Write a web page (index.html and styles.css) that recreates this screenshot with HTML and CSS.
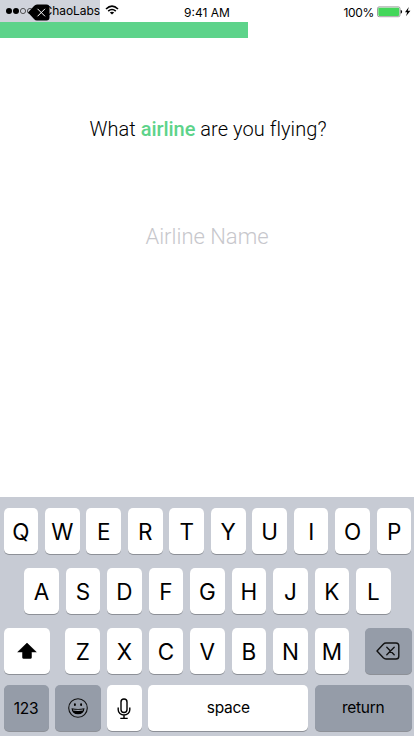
FILE: index.html
```html
<!DOCTYPE html>
<html lang="en">
<head>
<meta charset="utf-8">
<title>Airline</title>
<link rel="stylesheet" href="styles.css">
</head>
<body>
<div class="screen">
  <header class="status">
    <div class="carrier">
      <svg class="signal" width="36" height="22" viewBox="0 0 36 22"><circle cx="9" cy="11" r="3"/><circle cx="16" cy="11" r="3"/><g fill="none" stroke="#333" stroke-width=".8"><circle cx="23" cy="11" r="2.6"/><circle cx="30" cy="11" r="2.6"/></g></svg>
      <span class="carrier-name">ChaoLabs</span>
      <svg class="clear" width="23" height="18" viewBox="0 0 23 18"><path d="M1 8.6 7 2Q8.2.5 10 .5h9.500q3 0 3 3v10q0 3-3 3H10q-1.800 0-3-1.500z"/><path d="m10.500 4.800 7.500 7.500m0-7.500L10.500 12.300" stroke="#fff" stroke-width="1"/></svg>
    </div>
    <svg class="wifi" width="14" height="10" viewBox="0 0 14 10" fill="none" stroke="#000" stroke-width="1.600"><path d="M1 4Q7-1.700 13 4M3.200 6.200Q7 2.800 10.800 6.200"/><path d="M4.800 7.600Q7 5.900 9.200 7.600L7 9.600z" fill="#000" stroke="none"/></svg>
    <time class="clock">9:41 AM</time>
    <div class="power">
      <span>100%</span>
      <svg width="36" height="12" viewBox="0 0 36 12"><rect x=".5" y=".9" width="22.500" height="9.800" rx="1.600" fill="#fff" stroke="#777" stroke-width=".7"/><rect x="1.300" y="1.700" width="20.900" height="8.200" rx=".8" fill="#43d75a"/><path d="M23.700 3.800q1.400.4 1.400 2t-1.400 2z"/><path d="M31.800 1 28 6.300h2.200L29 10.300 33.400 4.700h-2.600z"/></svg>
    </div>
  </header>
  <div class="progress"><div class="progress-fill"></div></div>
  <main>
    <h1>What <strong>airline</strong> are you flying?</h1>
    <div class="field">Airline Name</div>
  </main>
  <section class="keyboard">
    <div class="row row-top"><b>Q</b><b>W</b><b>E</b><b>R</b><b>T</b><b>Y</b><b>U</b><b>I</b><b>O</b><b>P</b></div>
    <div class="row row-home"><b>A</b><b>S</b><b>D</b><b>F</b><b>G</b><b>H</b><b>J</b><b>K</b><b>L</b></div>
    <div class="row row-bottom">
      <b><svg width="20" height="18" viewBox="0 0 20 18"><path d="M10 1 19.300 10H14.500v5.500q0 1-1 1h-7q-1 0-1-1V10H.7z" stroke="#000" stroke-width=".5" stroke-linejoin="round"/></svg></b>
      <div class="letters"><b>Z</b><b>X</b><b>C</b><b>V</b><b>B</b><b>N</b><b>M</b></div>
      <b class="dark"><svg width="24" height="18" viewBox="0 0 24 18" fill="none" stroke="#111" stroke-width="1.400" stroke-linejoin="round" stroke-linecap="round"><path d="M1 9 7.300 2.200Q8.500 1 10 1h10q2.800 0 2.800 2.800v10.400q0 2.800-2.800 2.800H10q-1.500 0-2.700-1.200z"/><path d="m10.800 5.300 7.400 7.400m0-7.400-7.400 7.400"/></svg></b>
    </div>
    <div class="row row-actions">
      <b class="dark small digits">123</b>
      <b class="dark"><svg width="20" height="20" viewBox="0 0 20 20"><circle cx="10" cy="10" r="9.300" fill="none" stroke="#111" stroke-width="1.100"/><ellipse cx="6.900" cy="6.700" rx="1" ry="1.400"/><ellipse cx="13.100" cy="6.700" rx="1" ry="1.400"/><path d="M3.500 10.300q6.500 1.300 13 0Q16 16.300 10 16.300T3.500 10.300z"/><path d="M4.800 11.400q5.200.9 10.400 0l-.4 1.100q-4.800.8-9.600 0z" fill="#a9afb9"/></svg></b>
      <b><svg class="mic" width="14" height="22" viewBox="0 0 14 22" fill="none" stroke="#000" stroke-width="1.400"><rect x="4" y="1" width="6" height="13.500" rx="3"/><path d="M1.200 9.500v2.300a5.800 5.200 0 0 0 11.600 0V9.500M7 17v3.400M3.300 20.400h7.400"/></svg></b>
      <b class="small">space</b>
      <b class="dark small">return</b>
    </div>
  </section>
</div>
</body>
</html>
```
FILE: styles.css
```css
* { box-sizing: border-box; }
body { margin: 0; background: #fff; color: #000; font-family: Inter, "Liberation Sans", sans-serif; }
svg { display: block; flex: none; }
.screen { width: 414px; height: 736px; display: flex; flex-direction: column; overflow: hidden; }
.status { height: 22px; display: grid; grid-template-columns: 105px 66px 72px 1fr; font-size: 12px; line-height: 22px; flex: none; }
.carrier { position: relative; width: 100px; height: 22px; background: #d0d3db; display: flex; }
.carrier-name { margin-left: 7.500px; font-size: 12px; letter-spacing: -.05px; white-space: nowrap; }
.clear { position: absolute; left: 27px; top: 4px; }
.wifi { margin-top: 5px; }
.clock { margin-left: 13px; padding-top: 2px; white-space: nowrap; font-size: 12px; }
.power { display: flex; justify-content: flex-end; gap: 3px; padding: 2px 1px 0 0; }
.power span { letter-spacing: -.3px; }
.power svg { margin-top: 4px; }
.progress { height: 16px; flex: none; }
.progress-fill { width: 248.400px; height: 16px; background: #5dd38a; }
main { flex: 1; text-align: center; font-family: Roboto, sans-serif; }
h1 { margin: 78px 0 0; padding-left: 2px; font-size: 20px; line-height: 26px; font-weight: 300; letter-spacing: .07px; }
h1 strong { color: #5dd38a; font-weight: 500; letter-spacing: -.05px; }
.field { margin-top: 80px; font-size: 22px; line-height: 30px; font-weight: 300; color: #c7c7cc; }
.keyboard { height: 239px; flex: none; background: #c7cbd4; padding: 11px 2px 0 3.500px; }
.row { display: grid; gap: 6.900px; height: 46.500px; }
.row-top { grid-template-columns: repeat(10, 34.600px); }
.row-home { grid-template-columns: repeat(9, 34.600px); margin: 13.500px 0 0 20.700px; }
.row-bottom { grid-template-columns: 46.400px 284px 46.700px; gap: 15.600px; margin-top: 13.200px; }
.letters { display: grid; grid-template-columns: repeat(7, 34.600px); gap: 6.950px; }
.letters b { padding-top: 2px; }
.row-actions { grid-template-columns: 45px 45.500px 34.600px 159.800px 96.800px; gap: 6.600px; margin-top: 10.800px; }
b { display: flex; align-items: center; justify-content: center; height: 46px; border-radius: 5px; background: #fff; box-shadow: 0 1px 0 #8d9097; font-size: 22.500px; font-weight: 400; }
.dark { background: #959ca8; }
.small { font-size: 15.500px; letter-spacing: -.3px; padding-bottom: 1px; }
.digits { padding: 1px 0 0; }
.mic { margin-top: 2px; }
```
